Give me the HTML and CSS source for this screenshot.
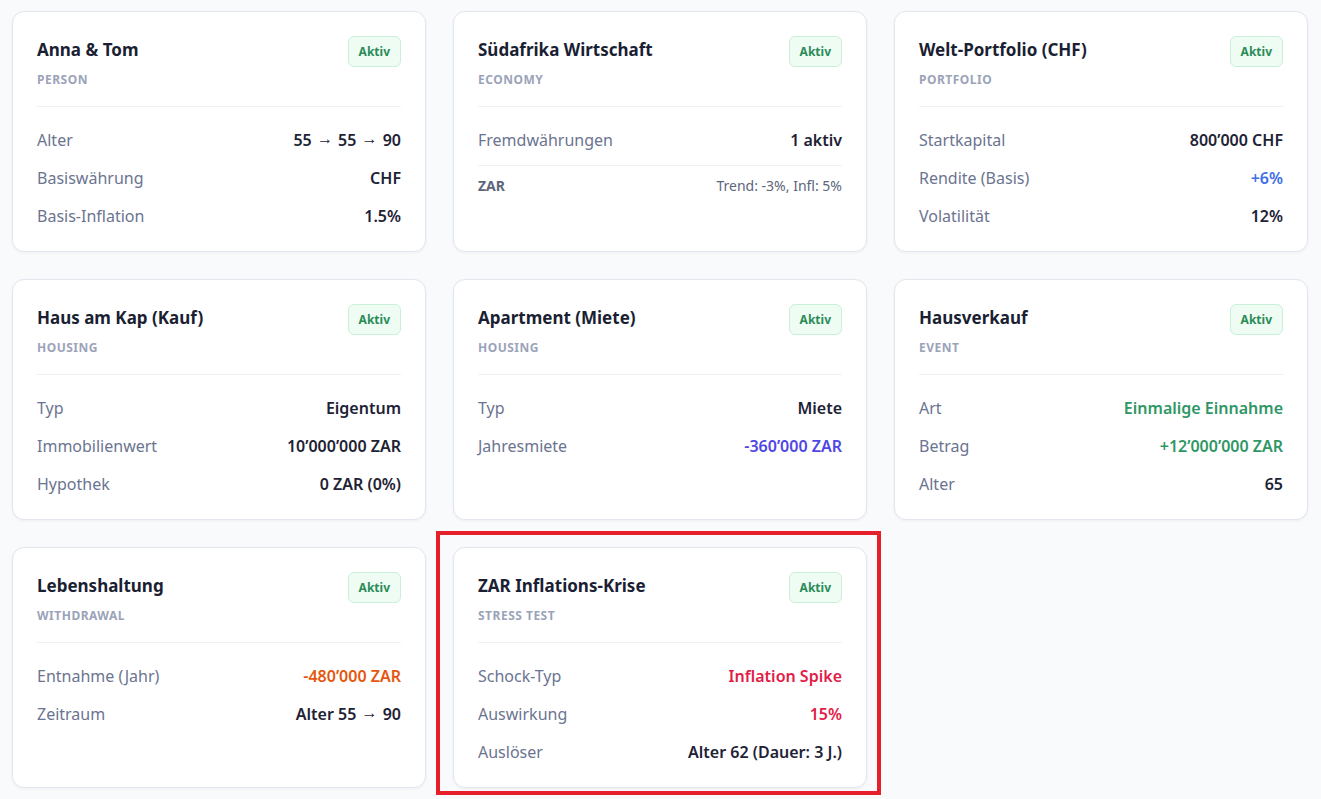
FILE: index.html
```html
<!DOCTYPE html>
<html lang="de">
<head>
<meta charset="utf-8">
<title>Szenario-Bausteine</title>
<link rel="stylesheet" href="styles.css">
</head>
<body>
<main class="grid">
  <section class="card">
    <header class="card-head">
      <div><h2 class="title">Anna &amp; Tom</h2><div class="kind">Person</div></div>
      <span class="badge">Aktiv</span>
    </header>
    <div class="rows">
      <div class="row"><span class="label">Alter</span><span class="value">55 <span class="arr">→</span> 55 <span class="arr">→</span> 90</span></div>
      <div class="row"><span class="label">Basiswährung</span><span class="value">CHF</span></div>
      <div class="row"><span class="label">Basis-Inflation</span><span class="value">1.5%</span></div>
    </div>
  </section>

  <section class="card">
    <header class="card-head">
      <div><h2 class="title">Südafrika Wirtschaft</h2><div class="kind">Economy</div></div>
      <span class="badge">Aktiv</span>
    </header>
    <div class="rows">
      <div class="row"><span class="label">Fremdwährungen</span><span class="value">1 aktiv</span></div>
    </div>
    <div class="subrows">
      <div class="subrow"><span class="sub-key">ZAR</span><span class="sub-val">Trend: -3%, Infl: 5%</span></div>
    </div>
  </section>

  <section class="card">
    <header class="card-head">
      <div><h2 class="title">Welt-Portfolio (CHF)</h2><div class="kind">Portfolio</div></div>
      <span class="badge">Aktiv</span>
    </header>
    <div class="rows">
      <div class="row"><span class="label">Startkapital</span><span class="value">800’000 CHF</span></div>
      <div class="row"><span class="label">Rendite (Basis)</span><span class="value blue">+6%</span></div>
      <div class="row"><span class="label">Volatilität</span><span class="value">12%</span></div>
    </div>
  </section>

  <section class="card">
    <header class="card-head">
      <div><h2 class="title">Haus am Kap (Kauf)</h2><div class="kind">Housing</div></div>
      <span class="badge">Aktiv</span>
    </header>
    <div class="rows">
      <div class="row"><span class="label">Typ</span><span class="value">Eigentum</span></div>
      <div class="row"><span class="label">Immobilienwert</span><span class="value">10’000’000 ZAR</span></div>
      <div class="row"><span class="label">Hypothek</span><span class="value">0 ZAR (0%)</span></div>
    </div>
  </section>

  <section class="card">
    <header class="card-head">
      <div><h2 class="title">Apartment (Miete)</h2><div class="kind">Housing</div></div>
      <span class="badge">Aktiv</span>
    </header>
    <div class="rows">
      <div class="row"><span class="label">Typ</span><span class="value">Miete</span></div>
      <div class="row"><span class="label">Jahresmiete</span><span class="value indigo">-360’000 ZAR</span></div>
    </div>
  </section>

  <section class="card">
    <header class="card-head">
      <div><h2 class="title">Hausverkauf</h2><div class="kind">Event</div></div>
      <span class="badge">Aktiv</span>
    </header>
    <div class="rows">
      <div class="row"><span class="label">Art</span><span class="value green">Einmalige Einnahme</span></div>
      <div class="row"><span class="label">Betrag</span><span class="value green">+12’000’000 ZAR</span></div>
      <div class="row"><span class="label">Alter</span><span class="value">65</span></div>
    </div>
  </section>

  <section class="card">
    <header class="card-head">
      <div><h2 class="title">Lebenshaltung</h2><div class="kind">Withdrawal</div></div>
      <span class="badge">Aktiv</span>
    </header>
    <div class="rows">
      <div class="row"><span class="label">Entnahme (Jahr)</span><span class="value orange">-480’000 ZAR</span></div>
      <div class="row"><span class="label">Zeitraum</span><span class="value">Alter 55 <span class="arr">→</span> 90</span></div>
    </div>
  </section>

  <section class="card highlighted">
    <header class="card-head">
      <div><h2 class="title">ZAR Inflations-Krise</h2><div class="kind">Stress Test</div></div>
      <span class="badge">Aktiv</span>
    </header>
    <div class="rows">
      <div class="row"><span class="label">Schock-Typ</span><span class="value red">Inflation Spike</span></div>
      <div class="row"><span class="label">Auswirkung</span><span class="value red">15%</span></div>
      <div class="row"><span class="label">Auslöser</span><span class="value">Alter 62 (Dauer: 3 J.)</span></div>
    </div>
  </section>
</main>
</body>
</html>
```
FILE: styles.css
```css
* { box-sizing: border-box; }
html, body { margin: 0; padding: 0; }
body {
  background: #f9fafc;
  font-family: "Noto Sans", "Open Sans", "Liberation Sans", sans-serif;
  color: #1e2235;
  overflow: hidden;
}
.grid {
  display: grid;
  grid-template-columns: repeat(3, 414px);
  grid-auto-rows: 241px;
  column-gap: 27px;
  row-gap: 27px;
  padding: 11px 0 11px 12px;
}
.card {
  position: relative;
  background: #ffffff;
  border: 1px solid #e4e6ef;
  border-radius: 12px;
  box-shadow: 0 1px 3px rgba(20, 30, 60, 0.05);
  padding: 24px 24px 16px 24px;
}
.card-head {
  display: flex;
  justify-content: space-between;
  align-items: flex-start;
  padding-bottom: 17px;
  border-bottom: 1px solid #eef0f5;
}
.title {
  margin: 1px 0 0 0;
  font-size: 17px;
  line-height: 26px;
  font-weight: 700;
  color: #1b1f33;
}
.kind {
  margin-top: 8px;
  font-size: 12px;
  line-height: 18px;
  font-weight: 700;
  text-transform: uppercase;
  color: #9ba3b9;
  letter-spacing: 0.5px;
}
.badge {
  display: inline-block;
  height: 31px;
  padding: 0 10px;
  line-height: 29px;
  font-size: 12px;
  font-weight: 700;
  color: #2a8b57;
  background: #effcf4;
  border: 1px solid #c9f1d8;
  border-radius: 6px;
}
.rows { margin-top: 14px; }
.row {
  display: flex;
  justify-content: space-between;
  align-items: center;
  padding: 7px 0;
  font-size: 16px;
  line-height: 24px;
}
.label { color: #6b7490; }
.value { font-weight: 600; color: #1e2235; }
.arr {
  display: inline-block;
  margin: 0 1px;
  line-height: 1;
  transform: translateY(-2px);
}
.value.blue { color: #3f6ee8; }
.value.indigo { color: #4f46e5; }
.value.green { color: #2f9766; }
.value.orange { color: #e5570d; }
.value.red { color: #e11d48; }
.subrows {
  margin-top: 6px;
  border-top: 1px solid #eef0f5;
}
.subrow {
  display: flex;
  justify-content: space-between;
  align-items: center;
  padding: 10px 0;
  line-height: 20px;
  font-size: 14px;
  color: #5d657b;
}
.sub-key { font-weight: 700; }
.highlighted::after {
  content: "";
  position: absolute;
  left: -18px;
  right: -15px;
  top: -17px;
  bottom: -8px;
  border: 4px solid #e5202a;
  pointer-events: none;
}
```
